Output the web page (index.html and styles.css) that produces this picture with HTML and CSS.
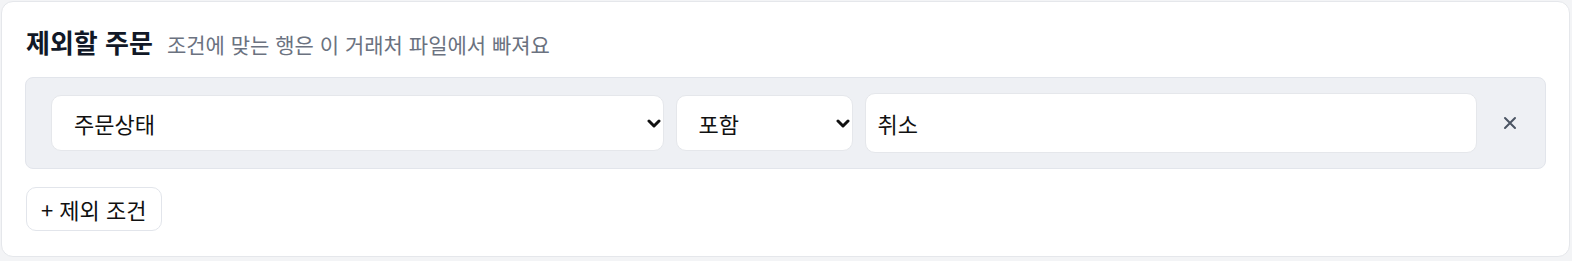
FILE: index.html
```html
<!DOCTYPE html>
<html lang="ko">
<head>
    <meta charset="UTF-8">
    <meta name="viewport" content="width=device-width, initial-scale=1.0">
    <title>제외할 주문</title>
    <link rel="stylesheet" href="styles.css">
</head>
<body>
    <!-- Exclusion rules card -->
    <div class="card">
        <div class="card-head">
            <h2 class="card-title">제외할 주문</h2>
            <span class="card-sub">조건에 맞는 행은 이 거래처 파일에서 빠져요</span>
        </div>

        <div class="rule-list">
            <div class="rule">
                <div class="select-wrap field-wide">
                    <select class="rule-select">
                        <option>주문상태</option>
                    </select>
                    <svg class="chev" width="14" height="9" viewBox="0 0 14 9"><path d="M2 2l5 5 5-5" fill="none" stroke="#111" stroke-width="3" stroke-linecap="round" stroke-linejoin="round"/></svg>
                </div>
                <div class="select-wrap field-op">
                    <select class="rule-select">
                        <option>포함</option>
                    </select>
                    <svg class="chev" width="14" height="9" viewBox="0 0 14 9"><path d="M2 2l5 5 5-5" fill="none" stroke="#111" stroke-width="3" stroke-linecap="round" stroke-linejoin="round"/></svg>
                </div>
                <input class="rule-input field-wide" type="text" value="취소">
                <button class="rule-remove" type="button" aria-label="삭제">
                    <svg width="14" height="14" viewBox="0 0 14 14"><path d="M2 2l10 10M12 2L2 12" stroke="#4b5563" stroke-width="2" stroke-linecap="round"/></svg>
                </button>
            </div>
        </div>

        <button class="add-btn" type="button">+ 제외 조건</button>
    </div>
</body>
</html>
```

FILE: styles.css
```css
* {
    margin: 0;
    padding: 0;
    box-sizing: border-box;
}

html, body {
    background-color: #f3f4f6;
}

body {
    padding: 1px 2px 0 1px;
    font-family: "Noto Sans CJK KR", "Noto Sans", sans-serif;
    color: #111827;
}

.card {
    background-color: white;
    border: 1px solid #e5e7eb;
    border-radius: 12px;
    padding: 24px 23px 24px 24px;
    height: 256px;
}

.card-head {
    display: flex;
    align-items: baseline;
    gap: 14px;
    margin-bottom: 17px;
    line-height: 32px;
}

.card-title {
    font-size: 26px;
    font-weight: 700;
}

.card-sub {
    font-size: 21px;
    color: #6b7280;
}

/* gray box holding the rules */
.rule-list {
    background-color: #eef0f4;
    border: 1px solid #e2e5eb;
    border-radius: 8px;
    padding: 15px 20px 15px 25px;
    margin-left: -1px;
}

.rule {
    display: flex;
    align-items: center;
    gap: 12px;
}

.field-wide {
    flex: 1 1 300px;
    min-width: 0;
}

.field-op {
    width: 177px;
    flex: none;
}

.select-wrap {
    position: relative;
}

.rule-select {
    appearance: none;
    -webkit-appearance: none;
    width: 100%;
    height: 56px;
    border: 1px solid #e5e7eb;
    border-radius: 10px;
    background-color: white;
    padding: 0 36px 0 22px;
    font-family: inherit;
    font-size: 22px;
    color: #111;
}

.chev {
    position: absolute;
    right: 3px;
    top: 24px;
    pointer-events: none;
}

.rule-input {
    height: 60px;
    border: 1px solid #e5e7eb;
    border-radius: 10px;
    background-color: white;
    padding: 0 12px;
    font-family: inherit;
    font-size: 22px;
    color: #111;
    outline: none;
}

.rule-remove {
    width: 30px;
    height: 32px;
    flex: none;
    margin-left: 6px;
    border: none;
    background: none;
    display: flex;
    align-items: center;
    justify-content: center;
    cursor: pointer;
}

.add-btn {
    margin-top: 18px;
    height: 44px;
    padding: 0 14px;
    border: 1px solid #e2e5eb;
    border-radius: 10px;
    background-color: white;
    font-family: inherit;
    font-size: 22px;
    color: #111;
    cursor: pointer;
}
```
